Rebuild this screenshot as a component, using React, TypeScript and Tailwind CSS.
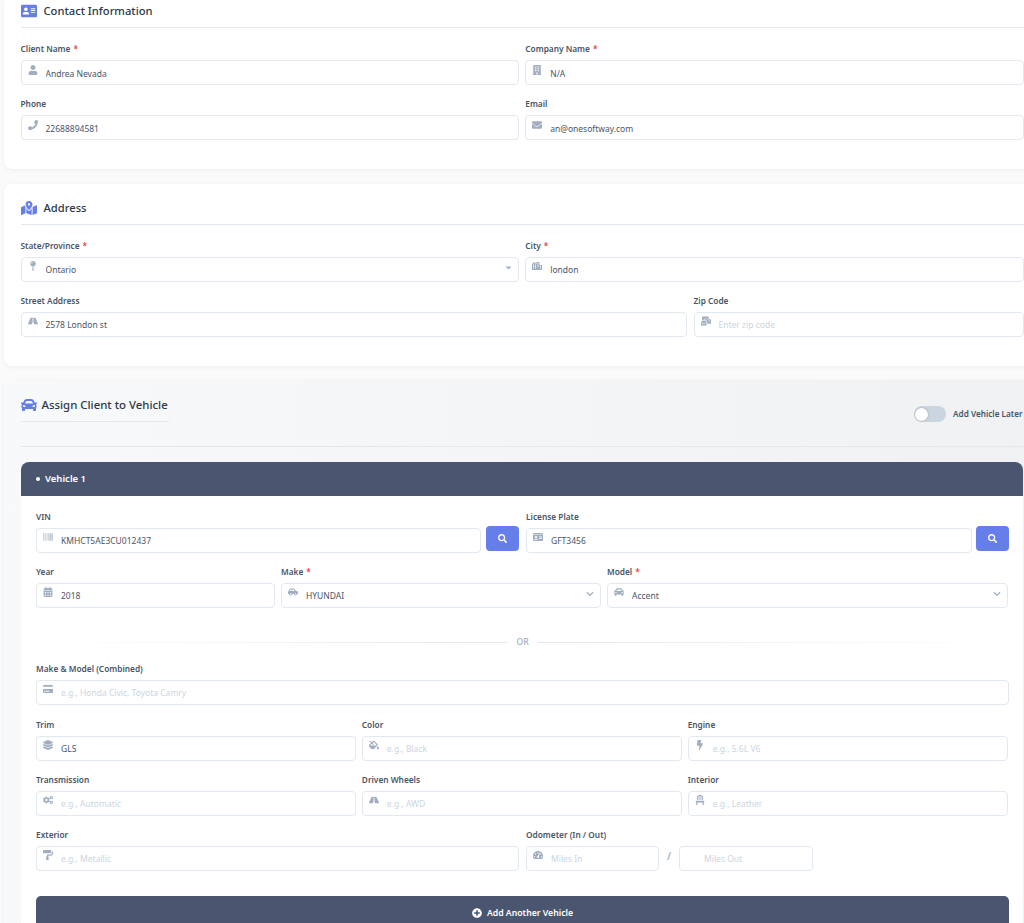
import type { ComponentType, ReactNode } from "react"
import {
  FaAddressCard,
  FaBarcode,
  FaBolt,
  FaBuilding,
  FaCalendarAlt,
  FaCar,
  FaCarSide,
  FaCaretDown,
  FaChair,
  FaChevronDown,
  FaCity,
  FaCogs,
  FaCreditCard,
  FaEnvelope,
  FaFillDrip,
  FaIdCard,
  FaLayerGroup,
  FaMailBulk,
  FaMapMarkedAlt,
  FaMapPin,
  FaPaintRoller,
  FaPhone,
  FaPlusCircle,
  FaRoad,
  FaSearch,
  FaTachometerAlt,
  FaUser,
} from "react-icons/fa"

type IconType = ComponentType<{ className?: string }>

function Label({ text, required }: { text: string; required?: boolean }) {
  return (
    <div className="h-[12px] text-[8.3px] leading-[12px] font-semibold text-[#4a5568] whitespace-nowrap">
      {text}
      {required && <span className="ml-[3px] text-[#e53e3e]">*</span>}
    </div>
  )
}

function Input({
  icon: Icon,
  value,
  placeholder,
  suffix,
  className = "",
}: {
  icon?: IconType
  value?: string
  placeholder?: string
  suffix?: ReactNode
  className?: string
}) {
  return (
    <div className={`relative h-[25px] ${className}`}>
      <input
        readOnly
        value={value ?? ""}
        placeholder={placeholder}
        className="h-full w-full rounded-[4px] border border-[#e2e8f0] bg-white pl-[24px] pr-[8px] pt-px text-[8.5px] text-[#4a5568] placeholder:text-[#cbd5e0] outline-none"
      />
      {Icon && <Icon className="absolute left-[7px] top-[6px] h-[10px] w-auto text-[#a0aec0]" />}
      {suffix}
    </div>
  )
}

function Field({
  label,
  required,
  className = "",
  inputClassName = "mt-[3px]",
  ...input
}: {
  label: string
  required?: boolean
  className?: string
  inputClassName?: string
  icon?: IconType
  value?: string
  placeholder?: string
  suffix?: ReactNode
}) {
  return (
    <div className={`min-w-0 ${className}`}>
      <Label text={label} required={required} />
      <Input className={inputClassName} {...input} />
    </div>
  )
}

function SearchButton() {
  return (
    <button className="flex h-[25px] w-[33px] shrink-0 items-center justify-center rounded-[4px] bg-[#667eea] text-white">
      <FaSearch className="h-[9px] w-[9px]" />
    </button>
  )
}

const chevron = <FaChevronDown className="absolute right-[7px] top-[9px] h-[8px] w-[8px] text-[#a0aec0]" />
const caret = <FaCaretDown className="absolute right-[6px] top-[8px] h-[9px] w-[9px] text-[#a0aec0]" />

export default function App() {
  return (
    <div className="h-[923px] w-[1024px] overflow-hidden bg-[#fafafa] font-['Noto_Sans',sans-serif]">
      <div className="w-[1040px] pl-[4px]">
        {/* contact */}
        <section className="h-[169px] rounded-b-[8px] bg-white pl-[16.5px] pr-[16px] shadow-[0_1px_4px_rgba(0,0,0,0.05)]">
          <div className="flex h-[28px] items-start gap-[7px] border-b border-[#e2e8f0] pt-[3px]">
            <FaAddressCard className="h-[16px] w-[16px] text-[#667eea]" />
            <h2 className="text-[11.2px] leading-[16px] font-medium text-[#2d3748]">Contact Information</h2>
          </div>
          <div className="mt-[14.5px] grid grid-cols-2 gap-x-[6px] gap-y-[14px]">
            <Field inputClassName="mt-[4px]" label="Client Name" required icon={FaUser} value="Andrea Nevada" />
            <Field inputClassName="mt-[4px]" label="Company Name" required icon={FaBuilding} value="N/A" />
            <Field inputClassName="mt-[4px]" label="Phone" icon={FaPhone} value="22688894581" />
            <Field inputClassName="mt-[4px]" label="Email" icon={FaEnvelope} value="an@onesoftway.com" />
          </div>
        </section>

        {/* address */}
        <section className="mt-[15px] h-[182px] rounded-[8px] bg-white pl-[16.5px] pr-[16px] pt-[16px] shadow-[0_1px_4px_rgba(0,0,0,0.05)]">
          <div className="flex h-[25px] items-start gap-[7px] border-b border-[#e2e8f0]">
            <FaMapMarkedAlt className="h-[16px] w-[16px] text-[#667eea]" />
            <h2 className="text-[11.2px] leading-[16px] font-medium text-[#2d3748]">Address</h2>
          </div>
          <div className="mt-[15px] grid grid-cols-2 gap-x-[6px]">
            <Field label="State/Province" required icon={FaMapPin} value="Ontario" suffix={caret} />
            <Field label="City" required icon={FaCity} value="london" />
          </div>
          <div className="mt-[15px] grid grid-cols-[666px_330px] gap-x-[7px]">
            <Field label="Street Address" icon={FaRoad} value="2578 London st" />
            <Field label="Zip Code" icon={FaMailBulk} placeholder="Enter zip code" />
          </div>
        </section>

        {/* vehicle */}
        <section className="mt-[14px] h-[600px] rounded-t-[8px] bg-gradient-to-r from-[#f8f9fa] to-[#eff1f3] pl-[16.5px] pr-[17px] pt-[16px] shadow-[0_1px_4px_rgba(0,0,0,0.05)]">
          <div className="flex h-[51px] items-start justify-between border-b border-[#e2e8f0]">
            <div className="flex h-[26px] w-[148px] items-start gap-[5px] border-b border-[#e2e8f0] pt-[1px]">
              <FaCar className="h-[16px] w-[16px] shrink-0 text-[#667eea]" />
              <h2 className="text-[11.4px] leading-[16px] font-medium text-[#2d3748] whitespace-nowrap">
                Assign Client to Vehicle
              </h2>
            </div>
            <div className="-mr-px mt-[10px] flex w-[110px] shrink-0 items-center gap-[7px]">
              <div className="flex h-[16px] w-[32px] shrink-0 items-center rounded-full bg-[#cbd5e0] px-[1px]">
                <div className="h-[13px] w-[13px] rounded-full bg-white shadow-[0_0_2px_rgba(0,0,0,0.3)]" />
              </div>
              <span className="whitespace-nowrap text-[8.2px] font-semibold text-[#4a5568]">Add Vehicle Later</span>
            </div>
          </div>

          <div className="ml-[0.5px] mt-[15px] overflow-hidden rounded-t-[8px] bg-white">
            <div className="flex h-[34px] items-center gap-[5px] bg-[#4a5570] pl-[15px] text-[9.5px] font-semibold text-white">
              <span className="h-[4px] w-[4px] rounded-full bg-white" />
              Vehicle 1
            </div>
            <div className="pl-[15px] pr-[14px] pt-[15px]">
              <div className="grid grid-cols-2 gap-x-[7px]">
                <div>
                  <Label text="VIN" />
                  <div className="mt-[3px] flex gap-[5px]">
                    <Input className="flex-1" icon={FaBarcode} value="KMHCT5AE3CU012437" />
                    <SearchButton />
                  </div>
                </div>
                <div>
                  <Label text="License Plate" />
                  <div className="mt-[3px] flex gap-[4px]">
                    <Input className="flex-1" icon={FaIdCard} value="GFT3456" />
                    <SearchButton />
                  </div>
                </div>
              </div>

              <div className="mt-[15px] grid grid-cols-[239px_320px_1fr] gap-x-[6px] pr-[1.5px]">
                <Field label="Year" icon={FaCalendarAlt} value="2018" />
                <Field label="Make" required icon={FaCarSide} value="HYUNDAI" suffix={chevron} />
                <Field label="Model" required icon={FaCar} value="Accent" suffix={chevron} />
              </div>

              <div className="mt-[30px] flex h-[12px] items-center gap-[9px]">
                <div className="h-px flex-1 bg-gradient-to-r from-transparent to-[#e2e8f0]" />
                <span className="text-[8.6px] font-medium text-[#a0aec0]">OR</span>
                <div className="h-px flex-1 bg-gradient-to-l from-transparent to-[#e2e8f0]" />
              </div>

              <Field
                className="mt-[15px]"
                label="Make & Model (Combined)"
                icon={FaCreditCard}
                placeholder="e.g., Honda Civic, Toyota Camry"
              />

              <div className="mt-[16px] grid grid-cols-3 gap-x-[6px] gap-y-[15px] pr-[1.5px]">
                <Field label="Trim" icon={FaLayerGroup} value="GLS" />
                <Field label="Color" icon={FaFillDrip} placeholder="e.g., Black" />
                <Field label="Engine" icon={FaBolt} placeholder="e.g., 5.6L V6" />
                <Field label="Transmission" icon={FaCogs} placeholder="e.g., Automatic" />
                <Field label="Driven Wheels" icon={FaRoad} placeholder="e.g., AWD" />
                <Field label="Interior" icon={FaChair} placeholder="e.g., Leather" />
              </div>

              <div className="mt-[15px] grid grid-cols-2 gap-x-[7px]">
                <Field label="Exterior" icon={FaPaintRoller} placeholder="e.g., Metallic" />
                <div>
                  <Label text="Odometer (In / Out)" />
                  <div className="mt-[3px] flex items-center">
                    <Input className="w-[133px]" icon={FaTachometerAlt} placeholder="Miles In" />
                    <span className="w-[20px] text-center text-[10px] font-semibold text-[#a0aec0]">/</span>
                    <Input className="w-[134px]" placeholder="Miles Out" />
                  </div>
                </div>
              </div>

              <button className="mt-[27px] flex h-[34px] w-full items-start justify-center gap-[5px] rounded-t-[5px] bg-[#4a5570] pt-[12px] text-[8.7px] leading-[10px] font-semibold text-white">
                <FaPlusCircle className="h-[10px] w-[10px]" />
                Add Another Vehicle
              </button>
            </div>
          </div>
        </section>
      </div>
    </div>
  )
}
